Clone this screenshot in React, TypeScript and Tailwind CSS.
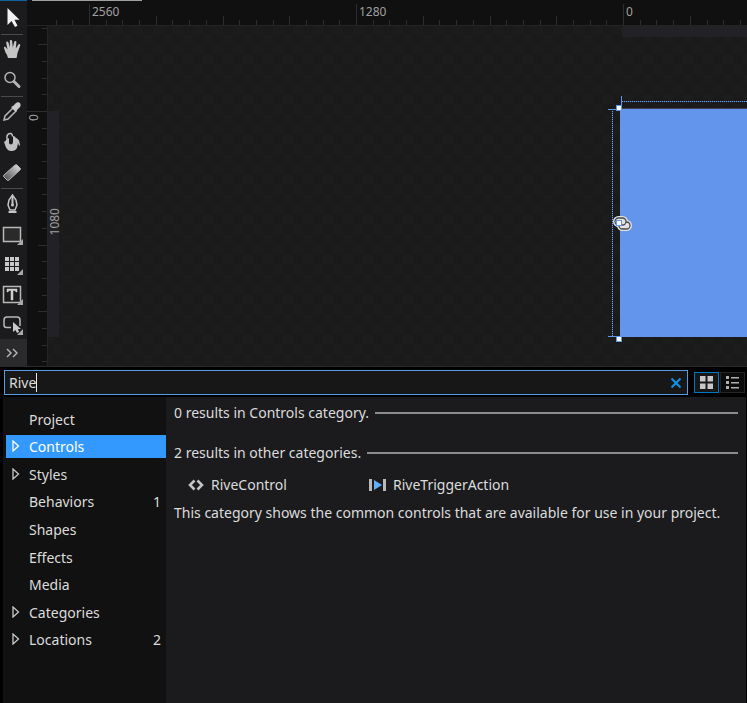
import React from "react";

const TICK = "#2c2c31";

function Tool({ label, children, corner }: { label: string; children: React.ReactNode; corner?: boolean }) {
  return (
    <button aria-label={label} className="block h-[30px] w-[27px] shrink-0">
      <svg width="24" height="30" viewBox="0 0 24 30" fill="none">
        {children}
        {corner && <path d="M23 20v6h-6z" fill="#a8a8a8" />}
      </svg>
    </button>
  );
}

function Divider() {
  return <div className="mx-px h-0.5 w-[22px] shrink-0 border-b border-[#4a4a4c]" />;
}

function Toolbar() {
  return (
    <div className="flex w-[27px] shrink-0 flex-col bg-[#1b1b1d]">
      <div className="h-px bg-[#0e639c]" />
      <div className="h-0.5" />
      <Tool label="Selection">
        <path d="M7.500 5v17l4-4 3.500 6 2.500-1.200-3-6.100h5z" fill="#f2f2f2" />
      </Tool>
      <Divider />
      <Tool label="Pan">
        <path d="M8 23q-.5-3-2.500-5.500L4 13c-.3-1.500 1.500-1.700 2-.5l1.500 2L6.200 8c-.2-1.500 1.600-2 2.200-.5l1.500 5L9.800 6c0-1.500 2.200-1.500 2.400 0l.6 6.500L14.200 7c.4-1.500 2.300-1 2.200.4l-.6 6.100 2.400-3.800c.8-1.200 2.400-.4 2 .9l-2.700 7.400-.9 5z" fill="#c4c4c4" />
      </Tool>
      <Tool label="Zoom">
        <circle cx="10" cy="12.500" r="5" stroke="#b4b4b4" strokeWidth="1.500" />
        <path d="M14 16.500l5 5" stroke="#b4b4b4" strokeWidth="3" strokeLinecap="round" />
      </Tool>
      <Divider />
      <Tool label="Eyedropper">
        <path d="M4 23l1-4 8-8 3 3-8 8z" stroke="#b4b4b4" strokeWidth="1.500" />
        <path d="M11 10l2-1 3-3c3-2 6 1 4 4l-3 3-1 2z" fill="#c8c8c8" />
      </Tool>
      <Tool label="Paint Bucket">
        <path d="M7 14V9q1-3 4-2.500 1.500.5 1.500 3" stroke="#c0c0c0" strokeWidth="1.500" />
        <path d="M4 15l5-4v5c1 2.500 4 1.500 4-1V9c1 0 2 .5 2.500 1.500C19 12 20 15 20 19q-1.500 0-2-3l-1 5q-2 3.500-6 3-3 0-5-3.500z" fill="#c0c0c0" />
      </Tool>
      <Tool label="Gradient">
        <defs>
          <linearGradient id="eraserFill" x1="0" x2="1" y1="1" y2="0">
            <stop stopColor="#444" />
            <stop offset="1" stopColor="#e4e4e4" />
          </linearGradient>
        </defs>
        <path d="M4 18L15 8q2-1 3 1l2 2q1 1 0 2L9 23q-1 1-2 0l-3-3q-1-1 0-2z" fill="url(#eraserFill)" stroke="#b4b4b4" />
      </Tool>
      <Divider />
      <Tool label="Pen">
        <path d="M12.500 6L9 11l-1 5 2 5h5l2-5-1-5z" stroke="#c4c4c4" strokeWidth="1.500" />
        <path d="M12.500 7v9M8.500 23h8" stroke="#c4c4c4" strokeWidth="2" />
        <circle cx="12.500" cy="16" r="1.500" fill="#c4c4c4" />
      </Tool>
      <Tool label="Rectangle" corner>
        <rect x="3.500" y="8.500" width="17" height="14" stroke="#b8b8b8" strokeWidth="1.500" fill="#2a2a2b" />
      </Tool>
      <Tool label="Grid" corner>
        {[8, 13, 18].map((y) => [5, 10, 15].map((x) => <rect key={x + "-" + y} x={x} y={y} width="4" height="4" fill="#c8c8c8" />))}
      </Tool>
      <Tool label="Text" corner>
        <rect x="3.500" y="7.500" width="17" height="16" stroke="#b8b8b8" strokeWidth="1.500" />
        <path d="M7 10h10v3h-1l-1-1.500h-2V21h-2v-9.500H9L8 13H7z" fill="#d0d0d0" stroke="#d0d0d0" strokeWidth=".5" />
      </Tool>
      <Tool label="Button" corner>
        <path d="M11 18.500H6.500q-2.500 0-2.500-2.500v-5q0-3 3-3h10q3 0 3 3v6" stroke="#b8b8b8" strokeWidth="1.500" />
        <path d="M13 13v10l2.500-2 1.500 3 2-1-1-3h3z" fill="#c8c8c8" />
      </Tool>
      <button aria-label="Show assets" className="flex flex-1 items-center bg-[#2a2a2c] pl-1.5">
        <svg width="12" height="10" viewBox="0 0 12 10" fill="none" stroke="#b0b0b0" strokeWidth="1.500">
          <path d="M1 1l4 4-4 4M7 1l4 4-4 4" />
        </svg>
      </button>
    </div>
  );
}

const ticks = Array.from({ length: 120 }, (_, i) => i - 6);

function HorizontalRuler() {
  return (
    <div className="relative h-[22px] overflow-hidden border-b border-[#242427] bg-[#101010]">
      <svg className="absolute inset-0 h-full w-full">
        {ticks.map((i) => {
          const x = Math.round(62 + i * 16.69);
          const h = i % 16 === 0 ? 21 : i % 4 === 0 ? 9 : 5;
          return x > 21 ? <rect key={i} x={x} y={21 - h} width="1" height={h} fill={TICK} /> : null;
        })}
      </svg>
      <div className="relative flex pl-[62px] text-[12px] leading-[16px] text-[#a0a0a0]">
        <span className="w-[267px] shrink-0 pl-[3px]">2560</span>
        <span className="w-[267px] shrink-0 pl-[3px]">1280</span>
        <span className="shrink-0 pl-[3px]">0</span>
      </div>
    </div>
  );
}

function VerticalRuler() {
  return (
    <div className="relative w-[21px] shrink-0 border-r border-[#242427] bg-[#101010]">
      <svg className="absolute inset-0 h-full w-full">
        {ticks.map((i) => {
          const y = Math.round(85 + i * 16.69);
          const w = i % 16 === 0 ? 20 : i % 4 === 0 ? 9 : 5;
          return <rect key={i} x={20 - w} y={y} width={w} height="1" fill={TICK} />;
        })}
      </svg>
      <span className="absolute left-0 top-[88px] rotate-180 text-[12px] leading-[13px] text-[#a0a0a0] [writing-mode:vertical-rl]">0</span>
    </div>
  );
}

function Artboard() {
  return (
    <div className="relative min-w-0 flex-1 bg-[#1c1c1c]">
      <svg className="absolute inset-0 h-full w-full">
        <defs>
          <pattern id="checker" x="5" y="8" width="20" height="20" patternUnits="userSpaceOnUse">
            <rect width="10" height="10" fill="#1a1a1a" />
            <rect x="10" y="10" width="10" height="10" fill="#1a1a1a" />
          </pattern>
        </defs>
        <rect width="100%" height="100%" fill="url(#checker)" />
        <rect x="0" y="85" width="11" height="226" fill="#212126" />
        <rect x="574" y="0" width="100%" height="11" fill="#212126" />
        <rect x="572" y="82" width="100%" height="1" fill="#3c4354" />
        <rect x="572" y="83" width="100%" height="228" fill="#6495ed" />
        <path d="M573.500 70v13M560 83.500h13M560 310.500h13" stroke="#6495ed" />
        <path d="M574 75.500h400M564.500 85v225" stroke="#29395a" />
        <path d="M574 75.500h400M564.500 85v225" stroke="#6fa0f5" strokeDasharray="1 1" />
        <g fill="#fff" stroke="#6495ed">
          <rect x="568.500" y="79.500" width="5" height="5" />
          <rect x="568.500" y="310.500" width="5" height="5" />
        </g>
        <g fill="none">
          <rect x="567" y="192" width="11" height="7" rx="3.500" stroke="#e2e2e2" strokeWidth="4" />
          <rect x="571" y="196" width="11" height="7" rx="3.500" stroke="#e2e2e2" strokeWidth="4" />
          <rect x="571" y="196" width="11" height="7" rx="3.500" fill="#e2e2e2" stroke="#4a4a4a" strokeWidth="1.300" />
          <rect x="567" y="192" width="11" height="7" rx="3.500" fill="#e2e2e2" stroke="#4a4a4a" strokeWidth="1.300" />
          <rect x="568.500" y="194.500" width="5" height="5" fill="#fff" stroke="#6495ed" />
        </g>
      </svg>
      <span className="absolute left-0 top-[182px] rotate-180 text-[12px] leading-[13px] text-[#a0a0a0] [writing-mode:vertical-rl]">1080</span>
    </div>
  );
}

const categories = [
  { name: "Project" },
  { name: "Controls", expandable: true, selected: true },
  { name: "Styles", expandable: true },
  { name: "Behaviors", count: 1 },
  { name: "Shapes" },
  { name: "Effects" },
  { name: "Media" },
  { name: "Categories", expandable: true },
  { name: "Locations", expandable: true, count: 2 },
];

function Sidebar() {
  return (
    <nav className="w-[163px] shrink-0 bg-[#111111] pl-[3px] pt-2">
      <ul className="grid h-[248px] grid-rows-9 items-center">
        {categories.map((c) => (
          <li key={c.name}>
            <button
              className={
                "flex h-[23px] w-full items-center pl-1.5 pr-[5px] text-left " +
                (c.selected ? "bg-[#3399ff] text-white" : "text-[#dcdcdc]")
              }
            >
              <span className="flex w-[17px] shrink-0">
                {c.expandable && (
                  <svg width="8" height="12" viewBox="0 0 8 12" fill="none" stroke={c.selected ? "#fff" : "#c8c8c8"} strokeWidth="1.300">
                    <path d="M1 1v10L6.500 6z" />
                  </svg>
                )}
              </span>
              <span className="flex-1 pt-0.5 leading-[20px]">{c.name}</span>
              {c.count && <span className="pt-0.5 leading-[20px]">{c.count}</span>}
            </button>
          </li>
        ))}
      </ul>
    </nav>
  );
}

function ResultHeading({ children }: { children: React.ReactNode }) {
  return (
    <div className="flex h-5 items-center gap-[6px]">
      <h2 className="whitespace-nowrap leading-[20px]">{children}</h2>
      <div className="h-0.5 flex-1 bg-[#8c8c8e]" />
    </div>
  );
}

function Results() {
  return (
    <main className="mr-px min-w-0 flex-1 bg-[#1b1b1d] pl-2 pr-2 pt-1.5 text-[#dcdcdc]">
      <ResultHeading>0 results in Controls category.</ResultHeading>
      <div className="mt-5">
        <ResultHeading>2 results in other categories.</ResultHeading>
      </div>
      <div className="mt-3 flex h-5 items-center pl-3.5 leading-[20px]">
        <button className="flex w-[181px] items-center gap-[7px] text-left">
          <svg width="16" height="12" viewBox="0 0 16 12" fill="none" stroke="#c4c4c4" strokeWidth="2.500">
            <path d="M6.500 1.500L2 6l4.500 4.500M9.500 1.500L14 6l-4.500 4.500" />
          </svg>
          RiveControl
        </button>
        <button className="flex items-center gap-[7px] text-left">
          <svg width="17" height="14" viewBox="0 0 17 14">
            <path d="M0 1h3v12H0zM14 1h3v12h-3z" fill="#b8b8b8" />
            <path d="M5 2v10l8-5z" fill="#63b0f8" />
          </svg>
          RiveTriggerAction
        </button>
      </div>
      <p className="mt-2 leading-[20px]">This category shows the common controls that are available for use in your project.</p>
    </main>
  );
}

function SearchBar() {
  return (
    <div className="flex h-[30px] shrink-0 items-start pl-1 pr-0.5 pt-[3px]">
      <div className="flex h-[25px] min-w-0 flex-1 items-center border border-[#569de5] bg-[#171717]">
        <div className="relative min-w-0 flex-1">
          <input aria-label="Search assets" defaultValue="Rive" className="block h-[23px] w-full bg-transparent pb-px pl-1 text-[#dcdcdc] outline-none" />
          <span className="absolute left-[31px] top-0.5 h-[19px] w-px bg-[#e8e8e8]" />
        </div>
        <button aria-label="Clear search" className="mr-1.5">
          <svg width="10" height="10" viewBox="0 0 10 10" stroke="#0e93ea" strokeWidth="2">
            <path d="M.5.5l9 9M9.500.5l-9 9" />
          </svg>
        </button>
      </div>
      <div className="ml-1.5 flex gap-px pt-0.5">
        <button aria-label="Grid view" className="flex h-[21px] w-[25px] items-center justify-center border border-[#0078c8] bg-[#171719]">
          <svg width="13" height="13" viewBox="0 0 13 13" fill="#c8c8c8">
            <path d="M0 0h5.500v5.500H0zM7.500 0H13v5.500H7.500zM0 7.500h5.500V13H0zM7.500 7.500H13V13H7.500z" />
          </svg>
        </button>
        <button aria-label="List view" className="flex h-[21px] w-[25px] items-center justify-center border border-[#252526] bg-[#0c0c0c]">
          <svg width="13" height="13" viewBox="0 0 13 13" fill="#b0b0b0">
            <path d="M0 0h3v3H0zM0 5h3v3H0zM0 10h3v3H0zM5 1h8v1.500H5zM5 6h8v1.500H5zM5 11h8v1.500H5z" />
          </svg>
        </button>
      </div>
    </div>
  );
}

export default function App() {
  return (
    <div className="flex min-h-screen flex-col bg-black font-['Noto_Sans','Open_Sans',sans-serif] text-[14px]">
      <div className="flex h-[366px] shrink-0 overflow-hidden">
        <Toolbar />
        <div className="flex min-w-0 flex-1 flex-col">
          <div className="h-1 bg-[#101010] pl-[5px]">
            <div className="h-px w-[110px] bg-[#a0a0a0]" />
          </div>
          <HorizontalRuler />
          <div className="flex min-h-0 flex-1">
            <VerticalRuler />
            <Artboard />
          </div>
        </div>
      </div>
      <section className="flex flex-1 flex-col border-t border-[#2a2a2c]">
        <SearchBar />
        <div className="flex flex-1 pl-[3px]">
          <Sidebar />
          <Results />
        </div>
      </section>
    </div>
  );
}
